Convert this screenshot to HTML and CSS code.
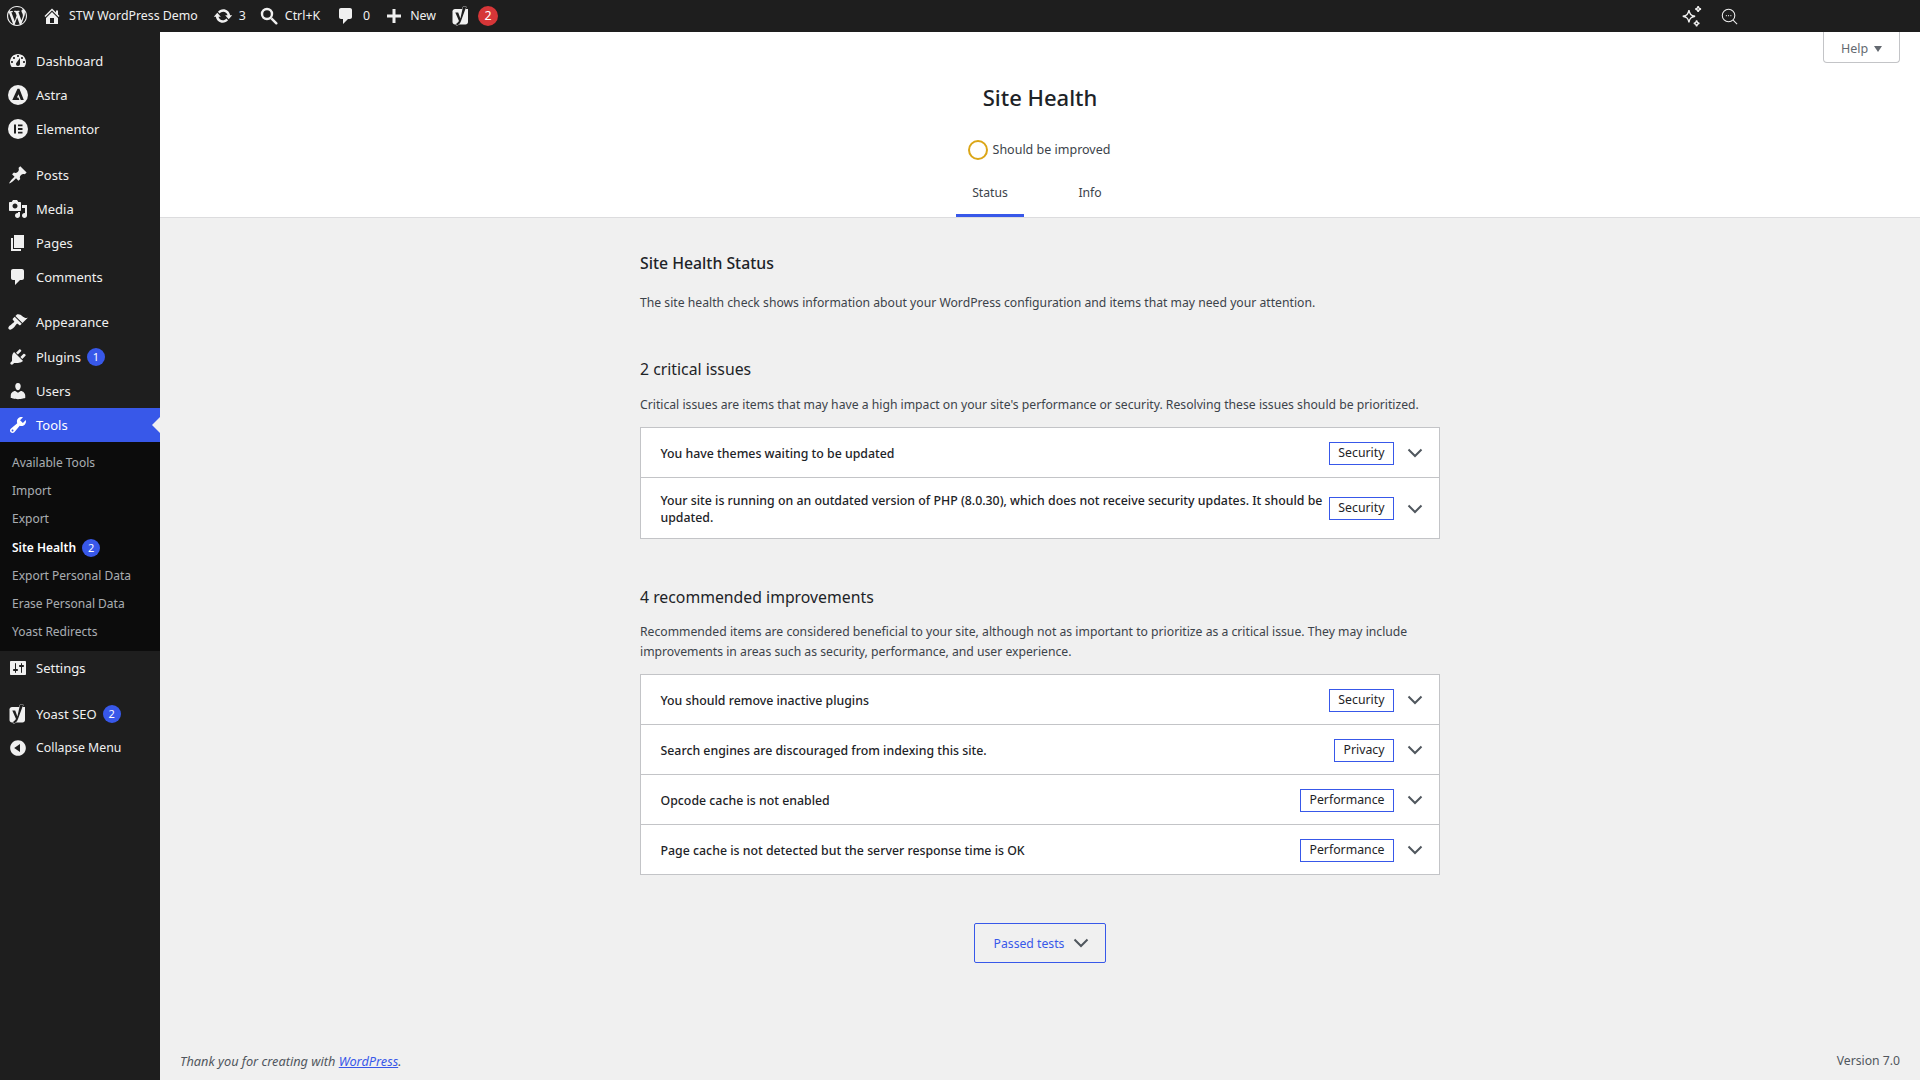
FILE: index.html
```html
<!DOCTYPE html>
<html lang="en">
<head>
    <meta charset="UTF-8">
    <title>Site Health</title>
    <link rel="stylesheet" href="styles.css">
</head>
<body>
    <header class="adminbar">
        <a class="bar-item bar-logo"><svg class="bar-icon-logo" viewBox="0 0 20 20"><path d="M20 10c0-5.51-4.49-10-10-10C4.48 0 0 4.49 0 10c0 5.52 4.48 10 10 10 5.51 0 10-4.48 10-10zM7.78 15.37L4.37 6.22c.55-.02 1.17-.08 1.17-.08.5-.06.44-1.13-.06-1.11 0 0-1.45.11-2.37.11-.18 0-.37 0-.58-.01C4.12 2.69 6.87 1.11 10 1.11c2.33 0 4.45.87 6.05 2.34-.68-.11-1.65.39-1.65 1.58 0 .74.45 1.36.9 2.1.35.61.55 1.36.55 2.46 0 1.49-1.4 5-1.4 5l-3.03-8.37c.54-.02.82-.17.82-.17.5-.05.44-1.25-.06-1.22 0 0-1.44.12-2.38.12-.87 0-2.33-.12-2.33-.12-.5-.03-.56 1.2-.06 1.22l.92.08 1.26 3.41zM17.41 10c.24-.64.74-1.87.43-4.25.7 1.29 1.05 2.71 1.05 4.25 0 3.29-1.73 6.24-4.4 7.78.97-2.59 1.94-5.2 2.92-7.78zM6.1 18.09C3.12 16.65 1.11 13.53 1.11 10c0-1.3.23-2.48.72-3.59C3.25 10.3 4.67 14.2 6.1 18.09zm4.03-6.63l2.58 6.98c-.86.29-1.76.45-2.71.45-.79 0-1.57-.11-2.29-.33.81-2.38 1.62-4.74 2.42-7.1z"/></svg></a>
        <a class="bar-item bar-site"><svg class="bar-icon" viewBox="0 0 20 20"><path d="M16 8.5l1.53 1.53-1.06 1.06L10 4.62l-6.47 6.47-1.06-1.06L10 2.5l4 4v-2h2v4zm-6-2.46l6 5.99V18H4v-5.97zM12 17v-5H8v5h4z"/></svg><span>STW WordPress Demo</span></a>
        <a class="bar-item bar-updates"><svg class="bar-icon" viewBox="0 0 20 20"><path d="M10.2 3.28c3.53 0 6.43 2.61 6.92 6h2.08l-3.5 4-3.5-4h2.32c-.45-1.97-2.21-3.45-4.32-3.45-1.45 0-2.73.71-3.54 1.78L4.95 5.66C6.23 4.2 8.11 3.28 10.2 3.28zm-.4 13.44c-3.52 0-6.43-2.61-6.92-6H.8l3.5-4c1.17 1.33 2.33 2.67 3.5 4H5.48c.45 1.97 2.21 3.45 4.32 3.45 1.45 0 2.73-.71 3.54-1.78l1.71 1.95c-1.28 1.46-3.15 2.38-5.25 2.38z"/></svg><span>3</span></a>
        <a class="bar-item bar-search"><svg class="bar-icon" viewBox="0 0 20 20"><circle cx="8" cy="8" r="5" fill="none" stroke="currentColor" stroke-width="2.4"/><path d="M11.5 13.2l1.7-1.7 5 5c.5.5.5 1.2 0 1.7s-1.2.5-1.7 0z"/></svg><span>Ctrl+K</span></a>
        <a class="bar-item bar-comments"><svg class="bar-icon" viewBox="0 0 20 20"><path d="M5 2h9c1.1 0 2 .9 2 2v7c0 1.1-.9 2-2 2h-2l-5 5v-5H5c-1.1 0-2-.9-2-2V4c0-1.1.9-2 2-2z"/></svg><span>0</span></a>
        <a class="bar-item bar-new"><svg class="bar-icon" viewBox="0 0 20 20"><path d="M17 8.500v3h-5.500v5.500h-3v-5.500H3v-3h5.500V3h3v5.500z"/></svg><span>New</span></a>
        <a class="bar-item bar-yoast"><svg class="bar-icon-yoast" viewBox="0 0 20 20"><path d="M4 3h13v13c0 1.400-1.100 2.500-2.500 2.500H4c-1.400 0-2.500-1.100-2.500-2.500V5.500C1.500 4.100 2.600 3 4 3z"/><path class="yoast-y" d="M12 .8h3.200L10 15c-.9 2.500-2.300 4-4.600 4.700v-2.300c1.300-.6 2.100-1.400 2.500-2.700L4.300 6.500h2.900l2.200 6z"/></svg><span class="bar-badge">2</span></a>
        <div class="bar-right">
            <svg class="bar-line-icon" viewBox="2.500 0.500 20 21.500" fill="none" stroke="currentColor" stroke-width="1.300"><path d="M9.500 5.500c.8 4 1.900 5.200 6 6-4.100.8-5.200 2-6 6-.8-4-1.900-5.200-6-6 4.100-.8 5.200-2 6-6z"/><path d="M18.500 1.500c.3 1.900 1 2.600 2.800 2.900-1.800.3-2.500 1-2.800 2.900-.3-1.900-1-2.600-2.800-2.900 1.800-.3 2.500-1 2.800-2.900zM17 15.500c.3 1.900 1 2.600 2.800 2.900-1.800.3-2.500 1-2.800 2.900-.3-1.900-1-2.600-2.800-2.900 1.800-.3 2.500-1 2.800-2.900z"/></svg>
            <svg class="bar-line-icon bar-find" viewBox="0 0 20 20" fill="none" stroke="currentColor" stroke-width="1.100"><circle cx="9" cy="9" r="6.600"/><path d="M13.800 13.800l4.200 4.200"/><path d="M6.200 9h.9M8.600 9h.9M11 9h.9" stroke-width="1.300"/></svg>
        </div>
    </header>
    <div class="layout">
        <nav class="sidebar">
            <ul class="menu">
                <li class="menu-item"><svg class="menu-icon" viewBox="0 0 20 20"><path fill-rule="evenodd" d="M3.760 16h12.480c1.100-1.370 1.760-3.110 1.760-5 0-4.420-3.580-8-8-8s-8 3.580-8 8c0 1.890.66 3.630 1.760 5zM10 4c.55 0 1 .45 1 1s-.45 1-1 1-1-.45-1-1 .45-1 1-1zM6 6c.55 0 1 .45 1 1s-.45 1-1 1-1-.45-1-1 .45-1 1-1zm8 0c.55 0 1 .45 1 1s-.45 1-1 1-1-.45-1-1 .45-1 1-1zm-5.370 5.550L12 7v6c0 1.100-.9 2-2 2s-2-.9-2-2c0-.57.24-1.080.63-1.450zM4 10c.55 0 1 .45 1 1s-.45 1-1 1-1-.45-1-1 .45-1 1-1zm12 0c.55 0 1 .45 1 1s-.45 1-1 1-1-.45-1-1 .45-1 1-1z"/></svg>Dashboard</li>
                <li class="menu-item"><svg class="menu-icon" viewBox="0 0 20 20"><circle cx="10" cy="10" r="10"/><path class="icon-cut" d="M9.500 3.700h1.900l4.400 11.300h-3l-2.300-5.800-1.600 3.400h1.500l1 2.400H4.300z"/></svg>Astra</li>
                <li class="menu-item"><svg class="menu-icon" viewBox="0 0 20 20"><circle cx="10" cy="10" r="10"/><path class="icon-cut" d="M6 5.500h2v9H6zM10 5.500h4.500v1.800H10zM10 9.100h4.500v1.800H10zM10 12.700h4.500v1.800H10z"/></svg>Elementor</li>
                <li class="menu-sep"></li>
                <li class="menu-item"><svg class="menu-icon" viewBox="0 0 20 20"><path d="M10.440 3.020l1.820-1.820 6.360 6.350-1.830 1.820c-1.050-.68-2.480-.57-3.410.36l-.75.75c-.92.93-1.040 2.350-.35 3.410l-1.830 1.820-2.410-2.410-2.800 2.790c-.42.42-3.380 2.710-3.800 2.290s1.860-3.390 2.280-3.810l2.790-2.790L4.100 9.360l1.830-1.820c1.050.69 2.480.57 3.400-.36l.75-.75c.93-.92 1.050-2.350.36-3.410z"/></svg>Posts</li>
                <li class="menu-item"><svg class="menu-icon" viewBox="0 0 20 20"><path d="M13 11V4c0-.55-.45-1-1-1h-1.670L9 1H5L3.670 3H2c-.55 0-1 .45-1 1v7c0 .55.45 1 1 1h10c.55 0 1-.45 1-1zM7 4.500c1.380 0 2.500 1.120 2.500 2.500S8.380 9.500 7 9.500 4.500 8.380 4.500 7 5.620 4.500 7 4.500zM14 6h5v10.500c0 1.380-1.120 2.500-2.500 2.500S14 17.880 14 16.500s1.120-2.500 2.500-2.500c.17 0 .34.020.5.050V9h-3V6zm-4 8.050V13h2v3.500c0 1.380-1.120 2.500-2.500 2.500S7 17.880 7 16.500 8.120 14 9.500 14c.17 0 .34.020.5.050z"/></svg>Media</li>
                <li class="menu-item"><svg class="menu-icon" viewBox="0 0 20 20"><path d="M6 15V2h10v13H6zm-1 1h8v2H3V5h2v11z"/></svg>Pages</li>
                <li class="menu-item"><svg class="menu-icon" viewBox="0 0 20 20"><path d="M5 2h9c1.100 0 2 .9 2 2v7c0 1.100-.9 2-2 2h-2l-5 5v-5H5c-1.100 0-2-.9-2-2V4c0-1.100.9-2 2-2z"/></svg>Comments</li>
                <li class="menu-sep menu-sep-short"></li>
                <li class="menu-item"><svg class="menu-icon" viewBox="0 0 20 20"><path d="M14.480 11.060L7.410 3.990l1.500-1.500c.5-.56 2.300-.47 3.510.32 1.210.8 1.430 1.280 2.910 2.100 1.180.64 2.450 1.260 4.450.85zm-.71.71L6.700 4.700 4.930 6.470c-.39.39-.39 1.020 0 1.410l1.060 1.060c.39.39.39 1.030 0 1.420-.6.6-1.430 1.110-2.210 1.690-.35.26-.7.53-1.010.84C1.430 13.230.4 14.960.3 15.760c-.12.99.93 2.060 1.910 1.930.8-.1 2.530-1.130 3.880-2.470.31-.31.58-.66.84-1.010.58-.78 1.090-1.610 1.690-2.210.39-.39 1.030-.39 1.420 0l1.060 1.060c.39.39 1.020.39 1.410 0z"/></svg>Appearance</li>
                <li class="menu-item menu-item-tall"><svg class="menu-icon" viewBox="0 0 20 20"><path d="M13.110 4.360L9.870 7.600 8 5.730l3.240-3.240c.35-.34 1.050-.2 1.560.32.52.51.66 1.210.31 1.550zm-8 1.770l.91-1.120 9.010 9.010-1.190.84c-.71.71-2.630 1.160-3.820 1.160H6.140L4.900 17.260c-.59.59-1.540.59-2.120 0-.59-.58-.59-1.530 0-2.120l1.240-1.240v-3.880c0-1.130.4-3.190 1.090-3.890zm7.260 3.970l3.240-3.240c.34-.35 1.040-.21 1.550.31.52.51.66 1.210.31 1.550l-3.240 3.250z"/></svg>Plugins<span class="count">1</span></li>
                <li class="menu-item"><svg class="menu-icon" viewBox="0 0 20 20"><path d="M10 9.250c-2.270 0-2.730-3.440-2.730-3.440C7 4.020 7.820 2 9.970 2c2.160 0 2.980 2.020 2.710 3.810 0 0-.41 3.440-2.680 3.440zm0 2.570L12.720 10c2.390 0 4.520 2.330 4.520 4.530v2.490s-3.650 1.130-7.240 1.130c-3.650 0-7.240-1.130-7.240-1.130v-2.490c0-2.250 1.940-4.480 4.470-4.480z"/></svg>Users</li>
                <li class="menu-item menu-item-active"><svg class="menu-icon" viewBox="0 0 20 20"><path d="M16.680 9.770c-1.340 1.340-3.300 1.670-4.950.99l-5.410 6.520c-.99.99-2.590.99-3.580 0s-.99-2.590 0-3.570l6.520-5.420c-.68-1.650-.35-3.610.99-4.950 1.280-1.280 3.120-1.620 4.720-1.060l-2.890 2.890 2.820 2.820 2.860-2.870c.53 1.580.18 3.390-1.080 4.650zM3.810 16.210c.4.39 1.040.39 1.430 0 .4-.4.4-1.040 0-1.430-.39-.4-1.030-.4-1.430 0-.39.39-.39 1.030 0 1.430z"/></svg>Tools</li>
                <li>
                    <ul class="submenu">
                        <li>Available Tools</li>
                        <li>Import</li>
                        <li>Export</li>
                        <li class="submenu-current">Site Health<span class="count">2</span></li>
                        <li>Export Personal Data</li>
                        <li>Erase Personal Data</li>
                        <li>Yoast Redirects</li>
                    </ul>
                </li>
                <li class="menu-item"><svg class="menu-icon" viewBox="0 0 20 20"><path d="M18 16V4c0-.55-.45-1-1-1H3c-.55 0-1 .45-1 1v12c0 .55.45 1 1 1h14c.55 0 1-.45 1-1zM8 11h1c.55 0 1 .45 1 1s-.45 1-1 1H8v1.500c0 .28-.22.5-.5.5s-.5-.22-.5-.5V13H6c-.55 0-1-.45-1-1s.45-1 1-1h1V5.500c0-.28.22-.5.5-.5s.5.22.5.5V11zm5-2h-1c-.55 0-1-.45-1-1s.45-1 1-1h1V5.500c0-.28.22-.5.5-.5s.5.22.5.5V7h1c.55 0 1 .45 1 1s-.45 1-1 1h-1v5.500c0 .28-.22.5-.5.5s-.5-.22-.5-.5V9z"/></svg>Settings</li>
                <li class="menu-sep"></li>
                <li class="menu-item"><svg class="menu-icon" viewBox="0 0 20 20"><path d="M4 3h13v13c0 1.400-1.100 2.500-2.500 2.500H4c-1.400 0-2.500-1.100-2.500-2.500V5.500C1.500 4.100 2.600 3 4 3z"/><path class="yoast-y" d="M12 .8h3.200L10 15c-.9 2.500-2.300 4-4.600 4.700v-2.300c1.300-.6 2.100-1.400 2.500-2.700L4.300 6.500h2.900l2.200 6z"/></svg>Yoast SEO<span class="count">2</span></li>
                <li class="menu-item menu-collapse"><svg class="menu-icon" viewBox="0 0 20 20"><path d="M10 2.160c4.330 0 7.840 3.510 7.840 7.840s-3.510 7.840-7.840 7.840S2.160 14.330 2.160 10 5.710 2.160 10 2.160zm2 11.720V6.120L6.180 9.970z"/></svg>Collapse Menu</li>
            </ul>
        </nav>
        <main class="main">
            <a class="help-tab">Help<span class="help-arrow"></span></a>
            <section class="health-header">
                <h1>Site Health</h1>
                <div class="health-status"><span class="status-ring"></span>Should be improved</div>
                <div class="tabs">
                    <a class="tab tab-active">Status</a>
                    <a class="tab">Info</a>
                </div>
            </section>
            <section class="health-body">
                <h2>Site Health Status</h2>
                <p class="intro">The site health check shows information about your WordPress configuration and items that may need your attention.</p>

                <h3>2 critical issues</h3>
                <p class="group-desc group-desc-first">Critical issues are items that may have a high impact on your site's performance or security. Resolving these issues should be prioritized.</p>
                <div class="issues">
                    <div class="issue"><span class="issue-title">You have themes waiting to be updated</span><span class="badge">Security</span><svg class="chevron" viewBox="0 0 16 10"><path d="M1.500 1.500L8 8l6.500-6.500"/></svg></div>
                    <div class="issue issue-tall"><span class="issue-title">Your site is running on an outdated version of PHP (8.0.30), which does not receive security updates. It should be updated.</span><span class="badge">Security</span><svg class="chevron" viewBox="0 0 16 10"><path d="M1.500 1.500L8 8l6.500-6.500"/></svg></div>
                </div>

                <h3 class="group-second">4 recommended improvements</h3>
                <p class="group-desc">Recommended items are considered beneficial to your site, although not as important to prioritize as a critical issue. They may include improvements in areas such as security, performance, and user experience.</p>
                <div class="issues">
                    <div class="issue"><span class="issue-title">You should remove inactive plugins</span><span class="badge">Security</span><svg class="chevron" viewBox="0 0 16 10"><path d="M1.500 1.500L8 8l6.500-6.500"/></svg></div>
                    <div class="issue"><span class="issue-title">Search engines are discouraged from indexing this site.</span><span class="badge">Privacy</span><svg class="chevron" viewBox="0 0 16 10"><path d="M1.500 1.500L8 8l6.500-6.500"/></svg></div>
                    <div class="issue"><span class="issue-title">Opcode cache is not enabled</span><span class="badge">Performance</span><svg class="chevron" viewBox="0 0 16 10"><path d="M1.500 1.500L8 8l6.500-6.500"/></svg></div>
                    <div class="issue"><span class="issue-title">Page cache is not detected but the server response time is OK</span><span class="badge">Performance</span><svg class="chevron" viewBox="0 0 16 10"><path d="M1.500 1.500L8 8l6.500-6.500"/></svg></div>
                </div>

                <div class="passed-wrap">
                    <button class="passed-btn">Passed tests<svg class="chevron" viewBox="0 0 16 10"><path d="M1.500 1.500L8 8l6.500-6.500"/></svg></button>
                </div>
            </section>
            <footer class="page-footer">
                <span class="footer-thanks">Thank you for creating with <a>WordPress</a>.</span>
                <span>Version 7.0</span>
            </footer>
        </main>
    </div>
</body>
</html>
```

FILE: styles.css
```css
* {
    box-sizing: border-box;
}

html,
body {
    margin: 0;
    padding: 0;
}

body {
    width: 1920px;
    height: 1080px;
    overflow: hidden;
    background-color: #f0f0f0;
    color: #3c434a;
    font-family: "Noto Sans", sans-serif;
    font-size: 13px;
    line-height: 20px;
}

ul {
    list-style: none;
    margin: 0;
    padding: 0;
}

/* top bar */
.adminbar {
    display: flex;
    align-items: center;
    height: 32px;
    background-color: #1e1e1e;
    color: #f0f0f0;
    font-size: 12.35px;
}

.bar-item {
    display: flex;
    align-items: center;
}

.bar-item svg {
    fill: currentColor;
}

.bar-icon {
    width: 20px;
    height: 20px;
}

.bar-icon-logo {
    width: 20px;
    height: 20px;
}

.bar-icon-yoast {
    width: 20px;
    height: 20px;
}

.bar-logo {
    margin-left: 7px;
}

.bar-site {
    margin-left: 15px;
    gap: 7px;
}

.bar-updates {
    margin-left: 15px;
    gap: 6px;
}

.bar-search {
    margin-left: 13px;
    gap: 6px;
}

.bar-comments {
    margin-left: 16px;
    gap: 7px;
}

.bar-new {
    margin-left: 14px;
    gap: 6px;
}

.bar-yoast {
    margin-left: 15px;
    gap: 7px;
}

.yoast-y {
    fill: #1e1e1e;
    stroke: #f0f0f0;
    stroke-width: 0.7;
    paint-order: stroke;
}

.bar-badge {
    width: 20px;
    height: 20px;
    border-radius: 50%;
    background-color: #d63638;
    color: #fff;
    text-align: center;
    line-height: 20px;
}

.bar-right {
    display: flex;
    align-items: center;
    gap: 17px;
    margin-left: auto;
    margin-right: 181px;
}

.bar-line-icon {
    width: 22px;
    height: 22px;
}

.bar-find {
    width: 19px;
    height: 19px;
}

/* sidebar */
.layout {
    display: grid;
    grid-template-columns: 160px 1fr;
    height: 1048px;
}

.sidebar {
    background-color: #1e1e1e;
    padding-top: 12px;
    color: #f0f0f0;
}

.menu-item {
    display: flex;
    align-items: center;
    height: 34px;
    padding-left: 8px;
    font-size: 13px;
}

.menu-item-tall {
    height: 35px;
}

.menu-icon {
    flex: none;
    width: 20px;
    height: 20px;
    margin-right: 8px;
    fill: #f0f0f0;
}

.icon-cut {
    fill: #1e1e1e;
}

.menu-sep {
    height: 12px;
}

.menu-sep-short {
    height: 11px;
}

.menu-item-active {
    position: relative;
    background-color: #3858e9;
    color: #fff;
}

.menu-item-active .menu-icon {
    fill: #fff;
}

.menu-item-active::after {
    content: "";
    position: absolute;
    right: 0;
    top: 9px;
    border: 8px solid transparent;
    border-left-width: 0;
    border-right-color: #f0f0f0;
}

.submenu {
    background-color: #0c0c0c;
    padding: 7px 0 5px;
    color: rgba(240, 246, 252, 0.7);
    font-size: 12px;
}

.submenu li {
    display: flex;
    align-items: center;
    height: 28.15px;
    padding-left: 12px;
}

.submenu .submenu-current {
    padding-top: 1px;
    color: #fff;
    font-weight: 600;
}

.count {
    display: inline-block;
    width: 18px;
    height: 18px;
    margin-left: 6px;
    border-radius: 50%;
    background-color: #3858e9;
    color: #fff;
    font-size: 11px;
    font-weight: 400;
    line-height: 18px;
    text-align: center;
}

.menu-collapse {
    padding-top: 1px;
    color: #f0f0f0;
    font-size: 12.3px;
}

/* main column */
.main {
    position: relative;
    display: flex;
    flex-direction: column;
}

.help-tab {
    position: absolute;
    top: 0;
    right: 20px;
    display: flex;
    align-items: center;
    justify-content: center;
    gap: 6px;
    width: 77px;
    height: 31px;
    padding-top: 3px;
    border: 1px solid #c3c4c7;
    border-top: 0;
    border-radius: 0 0 4px 4px;
    background-color: #fff;
    color: #646970;
    font-size: 12.5px;
}

.help-arrow {
    border-top: 6px solid #646970;
    border-left: 4px solid transparent;
    border-right: 4px solid transparent;
}

.health-header {
    display: flex;
    flex-direction: column;
    align-items: center;
    height: 186px;
    padding-top: 45px;
    border-bottom: 1px solid #dcdcde;
    background-color: #fff;
}

.health-header h1 {
    margin: 0;
    color: #1d2327;
    font-size: 22px;
    font-weight: 500;
    line-height: 40px;
}

.health-status {
    display: flex;
    align-items: center;
    gap: 5px;
    height: 26px;
    margin: 20px 0 0 -2px;
    font-size: 12.5px;
}

.status-ring {
    width: 20px;
    height: 20px;
    border: 2px solid #dba617;
    border-radius: 50%;
}

.tabs {
    display: grid;
    grid-template-columns: 100px 100px;
    justify-items: center;
    margin-top: 7px;
}

.tab {
    height: 47px;
    padding: 13px 16px 0;
    border-bottom: 3px solid transparent;
    font-size: 12.2px;
}

.tab-active {
    border-bottom-color: #3858e9;
}

.health-body {
    align-self: center;
    width: 800px;
    flex: 1;
}

.health-body h2 {
    margin: 33px 0 0;
    color: #1d2327;
    font-size: 15.8px;
    font-weight: 500;
    line-height: 24px;
}

.intro {
    margin: 18px 0 0;
    font-size: 12.2px;
}

.health-body h3 {
    margin: 42px 0 0;
    color: #1d2327;
    font-size: 15.8px;
    font-weight: 400;
    line-height: 28px;
}

.health-body .group-second {
    margin-top: 44px;
}

.group-desc {
    margin: 11px 0 0;
    font-size: 12.2px;
}

.group-desc-first {
    margin-top: 12px;
}

.issues {
    margin-top: 12px;
    border: 1px solid #c3c4c7;
    border-bottom: 0;
    background-color: #fff;
}

.issue {
    display: flex;
    align-items: center;
    height: 50px;
    padding: 1px 16px 0 19.5px;
    border-bottom: 1px solid #c3c4c7;
}

.issue-tall {
    height: 61px;
}

.issue-title {
    flex: 1;
    padding-right: 2px;
    color: #1d2327;
    font-size: 12.33px;
    font-weight: 500;
    line-height: 17px;
}

.badge {
    flex: none;
    height: 23px;
    padding: 0 8.5px;
    border: 1px solid #3858e9;
    color: #1d2327;
    font-size: 12.3px;
    line-height: 20px;
}

.chevron {
    flex: none;
    width: 16px;
    height: 10px;
    margin-left: 13px;
    fill: none;
    stroke: #50575e;
    stroke-width: 2;
}

.passed-wrap {
    display: flex;
    justify-content: center;
    margin-top: 48px;
}

.passed-btn {
    display: flex;
    align-items: center;
    justify-content: center;
    width: 132px;
    height: 40px;
    padding: 0 0 0 3px;
    border: 1px solid #3858e9;
    border-radius: 2px;
    background: transparent;
    color: #3858e9;
    font-family: inherit;
    font-size: 12.2px;
}

.passed-btn .chevron {
    margin-left: 9px;
}

.page-footer {
    display: flex;
    justify-content: space-between;
    height: 29px;
    padding: 0 20px;
    color: #50575e;
    font-size: 12.2px;
}

.footer-thanks {
    font-size: 12.75px;
    font-style: italic;
}

.footer-thanks a {
    color: #3858e9;
    text-decoration: underline;
}
```
